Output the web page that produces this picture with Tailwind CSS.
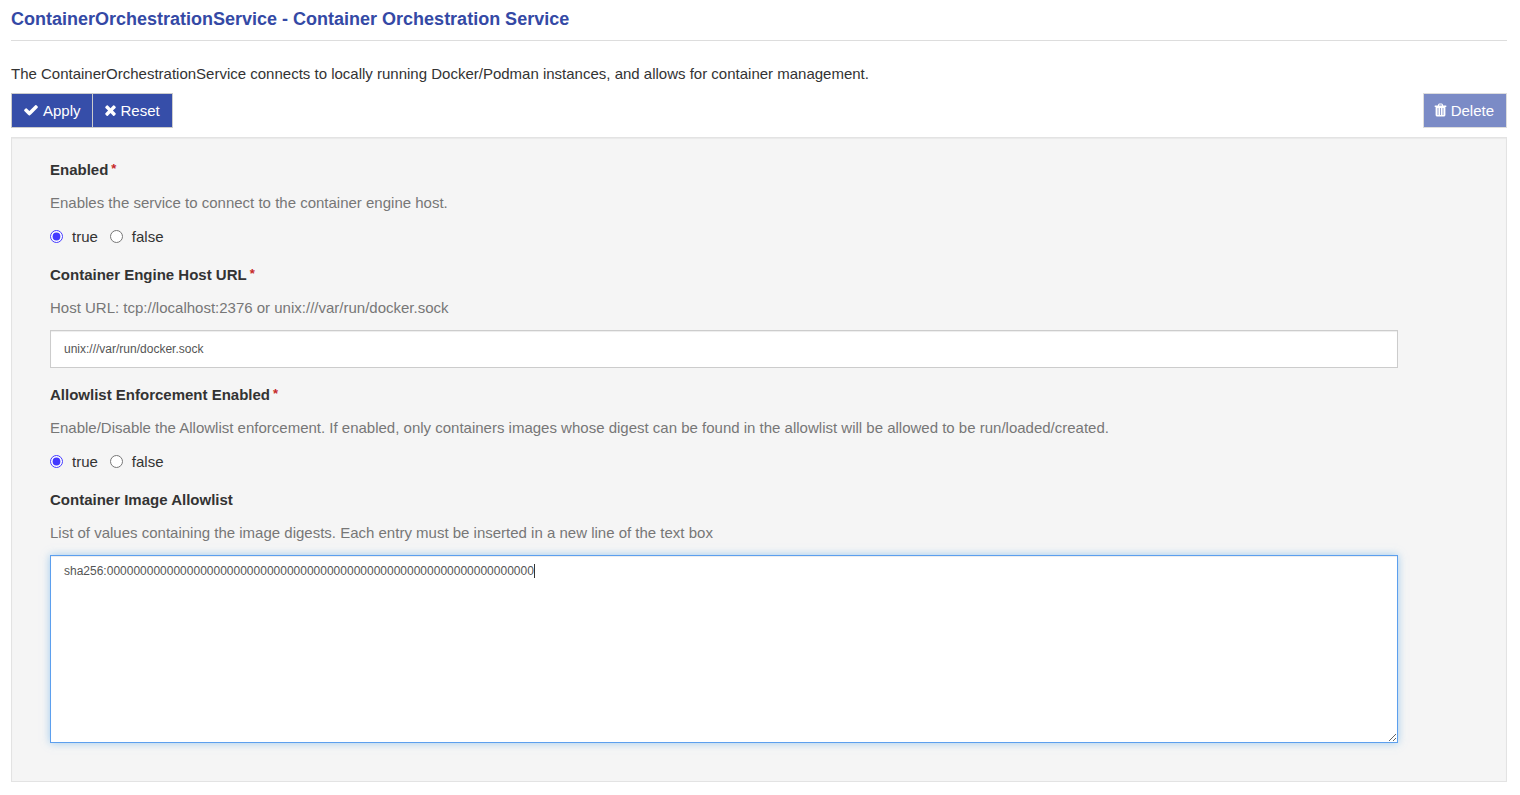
<!DOCTYPE html>
<html lang="en">
<head>
<meta charset="utf-8">
<meta name="viewport" content="width=device-width, initial-scale=1">
<title>ContainerOrchestrationService</title>
<script src="https://cdn.jsdelivr.net/npm/@tailwindcss/browser@4"></script>
</head>
<body class="bg-white pr-[13px] pb-3 pl-[11px] font-['Liberation_Sans',Arial,sans-serif] text-[15px] leading-5 text-[#333]">
<header class="border-b border-[#ddd] pt-[9px] pb-[11px]">
  <h1 class="text-lg leading-5 font-bold text-[#3449a5]">ContainerOrchestrationService - Container Orchestration Service</h1>
</header>
<main>
  <p class="mt-[23px]">The ContainerOrchestrationService connects to locally running Docker/Podman instances, and allows for container management.</p>
  <div class="mt-[9px] flex justify-between">
    <div class="flex">
      <button type="button" class="flex h-[35px] items-center gap-1 border border-[#ccc] bg-[#364ea9] px-[11px] text-white">
        <svg class="mb-px size-4" viewBox="0 0 1792 1792" fill="currentColor" aria-hidden="true"><path d="M1671 566q0 40-28 68l-724 724-136 136q-28 28-68 28t-68-28l-136-136-362-362q-28-28-28-68t28-68l136-136q28-28 68-28t68 28l294 295 656-657q28-28 68-28t68 28l136 136q28 28 28 68z"/></svg>
        Apply
      </button>
      <button type="button" class="-ml-px flex h-[35px] items-center gap-1 border border-[#ccc] bg-[#364ea9] pr-3 pl-[11px] text-white">
        <svg class="mb-px h-4 w-[13px]" viewBox="192 0 1408 1792" fill="currentColor" aria-hidden="true"><path d="M1490 1322q0 40-28 68l-136 136q-28 28-68 28t-68-28l-294-294-294 294q-28 28-68 28t-68-28l-136-136q-28-28-28-68t28-68l294-294-294-294q-28-28-28-68t28-68l136-136q28-28 68-28t68 28l294 294 294-294q28-28 68-28t68 28l136 136q28 28 28 68t-28 68l-294 294 294 294q28 28 28 68z"/></svg>
        Reset
      </button>
    </div>
    <button type="button" disabled class="flex h-[35px] items-center gap-1 border border-[#ccc] bg-[#364ea9] pr-3 pl-[10px] text-white opacity-65">
      <svg class="mb-px h-4 w-[13px]" viewBox="0 0 13 16" fill="currentColor" aria-hidden="true"><path fill-rule="evenodd" d="M1 3.5h2.8L4.4 2.1Q4.7 1.5 5.4 1.5h2.2Q8.3 1.5 8.6 2.1L9.2 3.5H12Q12.4 3.5 12.4 3.9V4.6Q12.4 5 12 5H11.4V13Q11.4 14.4 10.2 14.4H2.8Q1.6 14.4 1.6 13V5H1Q.6 5 .6 4.6V3.9Q.6 3.5 1 3.5zM5 3.5h3L7.6 2.6H5.4zM3.6 6v7h.8V6zM6.1 6v7h.8V6zM8.6 6v7h.8V6z"/></svg>
      Delete
    </button>
  </div>
  <form class="mt-[9px] border border-[#e3e3e3] bg-[#f5f5f5] pt-[22px] pr-[108px] pb-[38px] pl-[38px] shadow-[inset_0_1px_1px_rgba(0,0,0,0.05)]">
    <fieldset>
      <legend class="font-bold">Enabled<span class="ml-[3px] align-top text-[13px] leading-[18px] text-[#c62828]">*</span></legend>
      <p class="mt-[13px] text-[#777]">Enables the service to connect to the container engine host.</p>
      <div class="mt-[14px] flex gap-3">
        <label class="flex items-center gap-[9px]"><input type="radio" name="enabled" checked class="mb-px size-[13px] accent-[#4338ff]">true</label>
        <label class="flex items-center gap-[9px]"><input type="radio" name="enabled" class="mb-px size-[13px] accent-[#4338ff]">false</label>
      </div>
    </fieldset>
    <div class="mt-[18px]">
      <label for="host" class="block font-bold">Container Engine Host URL<span class="ml-[3px] align-top text-[13px] leading-[18px] text-[#c62828]">*</span></label>
      <p class="mt-[13px] text-[#777]">Host URL: tcp://localhost:2376 or unix:///var/run/docker.sock</p>
      <input id="host" type="text" value="unix:///var/run/docker.sock" class="mt-3 block h-[38px] w-full border border-[#ccc] bg-white px-[13px] text-xs text-[#555] shadow-[inset_0_1px_1px_rgba(0,0,0,0.075)]">
    </div>
    <fieldset class="mt-[17px]">
      <legend class="font-bold">Allowlist Enforcement Enabled<span class="ml-[3px] align-top text-[13px] leading-[18px] text-[#c62828]">*</span></legend>
      <p class="mt-[13px] text-[#777]">Enable/Disable the Allowlist enforcement. If enabled, only containers images whose digest can be found in the allowlist will be allowed to be run/loaded/created.</p>
      <div class="mt-[14px] flex gap-3">
        <label class="flex items-center gap-[9px]"><input type="radio" name="allowlist" checked class="mb-px size-[13px] accent-[#4338ff]">true</label>
        <label class="flex items-center gap-[9px]"><input type="radio" name="allowlist" class="mb-px size-[13px] accent-[#4338ff]">false</label>
      </div>
    </fieldset>
    <div class="mt-[18px]">
      <label for="images" class="block font-bold">Container Image Allowlist</label>
      <p class="mt-[13px] text-[#777]">List of values containing the image digests. Each entry must be inserted in a new line of the text box</p>
      <div class="relative mt-3">
        <textarea id="images" spellcheck="false" class="block h-[188px] w-full resize border border-[#5c9fee] bg-white px-[13px] py-[6px] text-xs leading-[18px] text-[#555] shadow-[inset_0_1px_1px_rgba(0,0,0,0.075),0_0_8px_rgba(102,175,233,0.6)] outline-none">sha256:0000000000000000000000000000000000000000000000000000000000000000</textarea>
        <span class="absolute top-[9px] left-[484px] h-[14px] w-px bg-[#333]" aria-hidden="true"></span>
      </div>
    </div>
  </form>
</main>
</body>
</html>
